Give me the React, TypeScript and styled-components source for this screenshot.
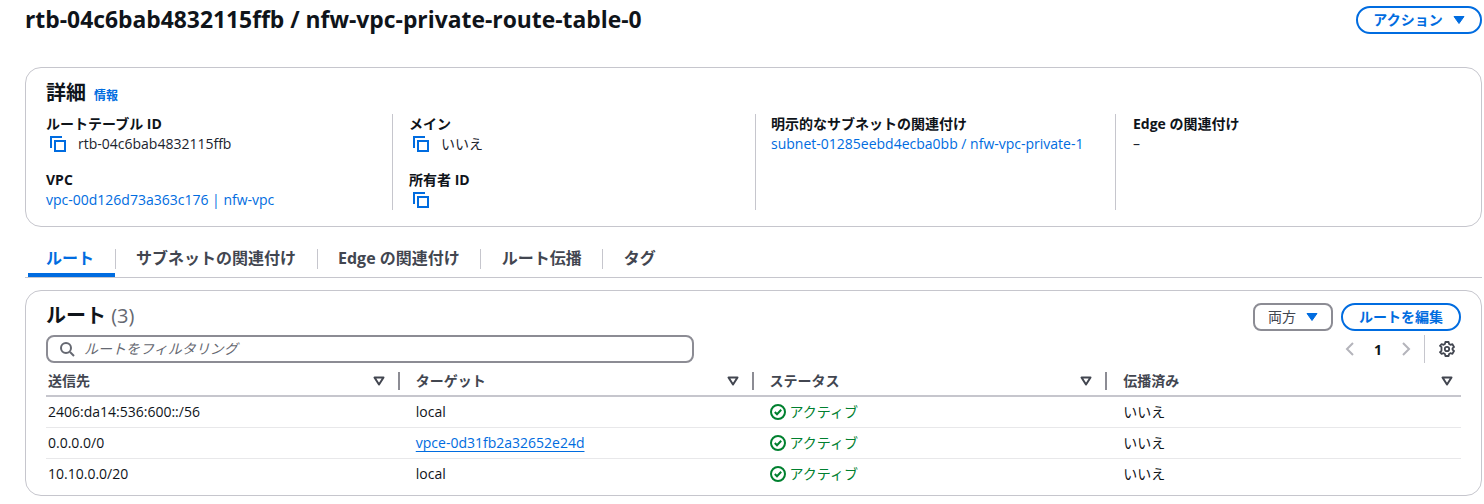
import React from "react";
import styled, { createGlobalStyle } from "styled-components";

const FONT = `"Open Sans", "Noto Sans CJK JP", sans-serif`;

const Global = createGlobalStyle`
  html, body { margin: 0; padding: 0; background: #fff; }
  body { font-family: ${FONT}; color: #0f141a; font-size: 14px; overflow: hidden; }
  * { box-sizing: border-box; }
`;

const Page = styled.div`
  width: 1484px;
  height: 504px;
  padding: 0 2px 0 25px;
`;
const HeaderBar = styled.header`
  display: flex;
  justify-content: space-between;
  align-items: center;
  height: 40px;
`;
const Title = styled.h1`
  margin: 0;
  font-size: 22.85px;
  line-height: 40px;
  font-weight: 700;
`;
const Button = styled.button<{ $w: number }>`
  width: ${(p) => p.$w}px;
  height: 28px;
  display: inline-flex;
  align-items: center;
  justify-content: center;
  gap: 10px;
  padding: 0 0 1px;
  background: #fff;
  border: 2px solid #006ce0;
  border-radius: 14px;
  color: #006ce0;
  font: 700 14px/1 ${FONT};
`;
const SegButton = styled(Button)`
  border-color: #8c8c94;
  border-radius: 8px;
  color: #424650;
  font-weight: 400;
`;
const Card = styled.section`
  border: 1px solid #c6c6cd;
  border-radius: 16px;
  background: #fff;
`;
const DetailsCard = styled(Card)`
  height: 160px;
  margin-top: 27px;
  padding: 11px 20px 0;
`;
const CardHeading = styled.div`
  display: flex;
  align-items: baseline;
  gap: 8px;
  height: 28px;
`;
const HeadingText = styled.h2`
  margin: 0;
  font-size: 20px;
  line-height: 28px;
  font-weight: 700;
`;
const RoutesHeading = styled(HeadingText)`
  padding-bottom: 2px;
`;
const InfoLink = styled.a`
  font-size: 12px;
  font-weight: 700;
  color: #006ce0;
`;
const DetailGrid = styled.div`
  display: grid;
  grid-template-columns: 347px 363px 360px 1fr;
  height: 96px;
  margin-top: 7px;
`;
const DetailCol = styled.div<{ $pad: number }>`
  padding-left: ${(p) => p.$pad}px;
  border-right: 1px solid #c6c6cd;
  display: flex;
  flex-direction: column;
  gap: 16px;
  &:last-child { border-right: 0; }
`;
const Field = styled.div`
  height: 40px;
`;
const Label = styled.div`
  font-size: 14px;
  font-weight: 700;
  line-height: 20px;
`;
const Value = styled.div`
  display: flex;
  align-items: center;
  gap: 12px;
  min-height: 20px;
  font-size: 14px;
  line-height: 20px;
  color: #1b232d;
`;
const Link = styled.a`
  font-size: 14px;
  line-height: 20px;
  color: #006ce0;
`;
const CopyBox = styled.svg`
  margin-left: 4px;
  flex: none;
`;
const Tabs = styled.nav`
  display: flex;
  align-items: center;
  height: 37px;
  margin-top: 14px;
  border-bottom: 1px solid #c6c6cd;
  padding-left: 3px;
`;
const Tab = styled.div<{ $active?: boolean }>`
  position: relative;
  height: 36px;
  padding: 0 20.5px 5px ${(p) => (p.$active ? 18 : 21.5)}px;
  display: flex;
  align-items: center;
  font-size: 16px;
  font-weight: 700;
  color: ${(p) => (p.$active ? "#006ce0" : "#424650")};
  &::after {
    content: "";
    position: absolute;
    right: -1px;
    top: 8px;
    height: 20px;
    width: 1px;
    background: #c6c6cd;
  }
  &:last-child::after { display: none; }
  ${(p) => p.$active && `box-shadow: inset 0 -4px 0 #006ce0;`}
`;
const RoutesCard = styled(Card)`
  height: 206px;
  margin-top: 12px;
  padding: 12px 20px 0;
`;
const RoutesTop = styled.div`
  display: flex;
  justify-content: space-between;
  align-items: center;
  height: 28px;
`;
const Count = styled.span`
  font-weight: 400;
  color: #656871;
`;
const Actions = styled.div`
  display: flex;
  gap: 8px;
`;
const FilterRow = styled.div`
  display: flex;
  align-items: center;
  justify-content: space-between;
  height: 28px;
  margin-top: 4px;
`;
const Search = styled.div`
  width: 648px;
  height: 28px;
  display: flex;
  align-items: center;
  gap: 9px;
  padding-left: 11px;
  border: 2px solid #8c8c94;
  border-radius: 8px;
  font-size: 14px;
  font-style: italic;
  color: #656871;
`;
const Placeholder = styled.span`
  padding-bottom: 2px;
`;
const Pager = styled.div`
  display: flex;
  align-items: center;
  height: 28px;
`;
const PageNo = styled.span`
  width: 40px;
  text-align: center;
  font-size: 14px;
  font-weight: 700;
`;
const PagerDivider = styled.span`
  width: 1px;
  height: 28px;
  background: #c6c6cd;
  margin: 0 14px 0 10px;
`;
const GearBox = styled.span`
  display: flex;
  margin-right: 6px;
`;
const Table = styled.table`
  width: 100%;
  margin-top: 4px;
  border-collapse: collapse;
  table-layout: fixed;
`;
const Th = styled.th`
  height: 29px;
  padding: 0;
  border-bottom: 2px solid #c6c6cd;
  font-size: 14px;
  font-weight: 700;
  color: #424650;
  text-align: left;
`;
const ThInner = styled.div<{ $first?: boolean }>`
  display: flex;
  align-items: center;
  padding-left: ${(p) => (p.$first ? 2 : 16)}px;
`;
const ThLabel = styled.span`
  padding-bottom: 2px;
`;
const SortIcon = styled.svg<{ $last?: boolean }>`
  margin-left: auto;
  margin-right: ${(p) => (p.$last ? 8 : 0)}px;
`;
const ThSep = styled.span`
  width: 2px;
  height: 18px;
  margin: 0 0 0 13px;
  background: #8c8c94;
`;
const Td = styled.td<{ $first?: boolean }>`
  height: 31px;
  padding: 0 0 0 ${(p) => (p.$first ? 2 : 16)}px;
  font-size: 14px;
  color: #0f141a;
  border-bottom: 1px solid #e8e8ea;
`;
const Tr = styled.tr`
  &:last-child td { border-bottom: 0; }
`;
const TargetLink = styled.a`
  color: #006ce0;
  text-decoration: underline;
  text-underline-offset: 3px;
`;
const Status = styled.span`
  display: inline-flex;
  align-items: center;
  gap: 4px;
  color: #00802f;
  svg { transform: translateY(1px); }
`;
const Propagated = styled.span`
  vertical-align: 1px;
`;

const Copy = () => (
  <CopyBox width="16" height="16" viewBox="0 0 16 16" fill="none" stroke="#006ce0" strokeWidth="2">
    <path d="M1 12V1h11" />
    <rect x="5" y="5" width="10" height="10" />
  </CopyBox>
);
const Caret = ({ color }: { color: string }) => (
  <svg width="12" height="10" viewBox="0 0 12 10">
    <path d="M1 1.5h10L6 8.5z" fill={color} stroke={color} strokeLinejoin="round" />
  </svg>
);
const Sort = ({ last }: { last?: boolean }) => (
  <SortIcon $last={last} width="12" height="10" viewBox="0 0 12 10" fill="none">
    <path d="M1.5 1.5h9L6 8.5z" stroke="#424650" strokeWidth="2" strokeLinejoin="round" />
  </SortIcon>
);
const Check = () => (
  <svg width="16" height="16" viewBox="0 0 16 16" fill="none" stroke="#00802f" strokeWidth="2">
    <circle cx="8" cy="8" r="7" />
    <path d="M4.8 8l2.2 2.2 4.2-4.4" />
  </svg>
);

const headers = ["送信先", "ターゲット", "ステータス", "伝播済み"];
const rows: [string, string, boolean][] = [
  ["2406:da14:536:600::/56", "local", false],
  ["0.0.0.0/0", "vpce-0d31fb2a32652e24d", true],
  ["10.10.0.0/20", "local", false],
];

export default function App() {
  return (
    <Page>
      <Global />
      <HeaderBar>
        <Title>rtb-04c6bab4832115ffb / nfw-vpc-private-route-table-0</Title>
        <Button $w={126}>
          アクション <Caret color="#006ce0" />
        </Button>
      </HeaderBar>

      <DetailsCard>
        <CardHeading>
          <HeadingText>詳細</HeadingText>
          <InfoLink>情報</InfoLink>
        </CardHeading>
        <DetailGrid>
          <DetailCol $pad={0}>
            <Field>
              <Label>ルートテーブル ID</Label>
              <Value><Copy />rtb-04c6bab4832115ffb</Value>
            </Field>
            <Field>
              <Label>VPC</Label>
              <Link>vpc-00d126d73a363c176 | nfw-vpc</Link>
            </Field>
          </DetailCol>
          <DetailCol $pad={16}>
            <Field>
              <Label>メイン</Label>
              <Value><Copy />いいえ</Value>
            </Field>
            <Field>
              <Label>所有者 ID</Label>
              <Value><Copy /></Value>
            </Field>
          </DetailCol>
          <DetailCol $pad={15}>
            <Field>
              <Label>明示的なサブネットの関連付け</Label>
              <Link>subnet-01285eebd4ecba0bb / nfw-vpc-private-1</Link>
            </Field>
          </DetailCol>
          <DetailCol $pad={17}>
            <Field>
              <Label>Edge の関連付け</Label>
              <Value>–</Value>
            </Field>
          </DetailCol>
        </DetailGrid>
      </DetailsCard>

      <Tabs>
        <Tab $active>ルート</Tab>
        <Tab>サブネットの関連付け</Tab>
        <Tab>Edge の関連付け</Tab>
        <Tab>ルート伝播</Tab>
        <Tab>タグ</Tab>
      </Tabs>

      <RoutesCard>
        <RoutesTop>
          <RoutesHeading>ルート <Count>(3)</Count></RoutesHeading>
          <Actions>
            <SegButton $w={80}>両方 <Caret color="#006ce0" /></SegButton>
            <Button $w={120}>ルートを編集</Button>
          </Actions>
        </RoutesTop>
        <FilterRow>
          <Search>
            <svg width="16" height="16" viewBox="0 0 16 16" fill="none" stroke="#656871" strokeWidth="2">
              <circle cx="7" cy="7" r="5" />
              <path d="M11 11l4 4" />
            </svg>
            <Placeholder>ルートをフィルタリング</Placeholder>
          </Search>
          <Pager>
            <svg width="16" height="16" viewBox="0 0 16 16" fill="none" stroke="#b4b4bb" strokeWidth="2"><path d="M11 2L5 8l6 6" /></svg>
            <PageNo>1</PageNo>
            <svg width="16" height="16" viewBox="0 0 16 16" fill="none" stroke="#b4b4bb" strokeWidth="2"><path d="M5 2l6 6-6 6" /></svg>
            <PagerDivider />
            <GearBox>
              <svg width="16" height="16" viewBox="0 0 16 16" fill="none" stroke="#424650" strokeWidth="1.8" strokeLinejoin="round">
                <path d="M6.4 1h3.2l.5 2 1.3.8 2-.6 1.6 2.8-1.5 1.4v1.2l1.5 1.4-1.6 2.8-2-.6-1.3.8-.5 2H6.4l-.5-2-1.3-.8-2 .6L1 11.2l1.5-1.4V6.2L1 4.8l1.6-1.6 2 .6 1.3-.8z" />
                <circle cx="8" cy="8" r="2.2" />
              </svg>
            </GearBox>
          </Pager>
        </FilterRow>
        <Table>
          <thead>
            <tr>
              {headers.map((h, i) => (
                <Th key={h}>
                  <ThInner $first={i === 0}>
                    <ThLabel>{h}</ThLabel>
                    <Sort last={i === 3} />
                    {i < 3 && <ThSep />}
                  </ThInner>
                </Th>
              ))}
            </tr>
          </thead>
          <tbody>
            {rows.map(([dest, target, link]) => (
              <Tr key={dest}>
                <Td $first>{dest}</Td>
                <Td>{link ? <TargetLink>{target}</TargetLink> : target}</Td>
                <Td><Status><Check />アクティブ</Status></Td>
                <Td><Propagated>いいえ</Propagated></Td>
              </Tr>
            ))}
          </tbody>
        </Table>
      </RoutesCard>
    </Page>
  );
}
